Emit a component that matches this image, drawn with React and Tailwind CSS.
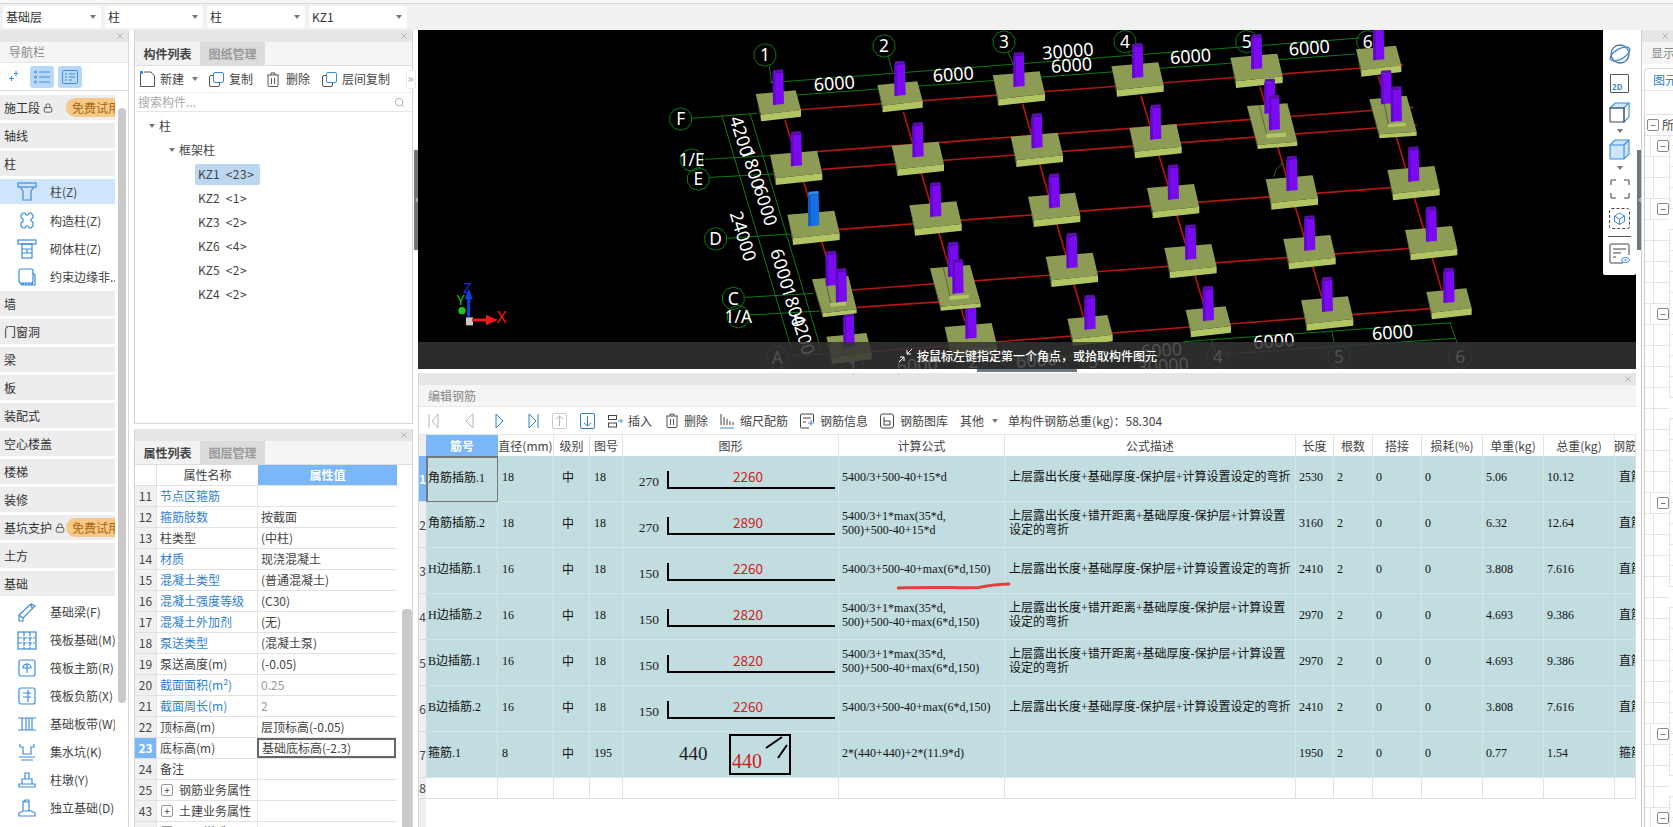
import React from 'react';
import { X, Search, Lock, ChevronsRight } from 'lucide-react';

const BLUE = '#3d8bdc';

// --- small drawings ---
const Ico = ({ w = 20, h = 20, children, color = BLUE, sw = 1.2 }) => (
  <svg width={w} height={h} viewBox={`0 0 ${w} ${h}`} fill="none" stroke={color} strokeWidth={sw} className="shrink-0">
    {children}
  </svg>
);

const navIcons = {
  col: <Ico><rect x="1" y="1" width="18" height="4" /><path d="M3 5l3 4v9h8V9l3-4" /></Ico>,
  gz: <Ico><path d="M6 2h2l1 2h2l1-2h2l2 2v3l-2 1v2l2 1v4l-2 2h-2l-1-2H9l-1 2H6l-2-2v-3l2-1v-3L4 7V4z" /></Ico>,
  qt: <Ico><rect x="1" y="1" width="18" height="4" /><rect x="5" y="5" width="10" height="14" /><path d="M5 10h10M5 14h10M10 10v4" /></Ico>,
  yb: <Ico><rect x="2" y="2" width="14" height="14" rx="2" /><path d="M16 6l2 2v10H5l-2-2M5 18l2-2M8 18l2-2M11 18l2-2M14 18l2-2" /></Ico>,
  jcl: <Ico><path d="M2 13L14 2l4 2L6 16v3H2zM2 13l4 3M14 2l1 4" /></Ico>,
  fb: <Ico><rect x="1" y="2" width="18" height="17" /><path d="M7 2v17M13 2v17M1 8h18M1 13h18" strokeDasharray="4 1" /></Ico>,
  zj: <Ico><rect x="2" y="2" width="16" height="16" rx="2" /><path d="M10 5v10M6 10a4 4 0 118 0H6z" /></Ico>,
  fj: <Ico><rect x="2" y="2" width="16" height="16" rx="2" /><path d="M6 7h8M6 11h8M11 4v12" /></Ico>,
  bd: <Ico><path d="M1 4h18M1 16h18M5 4v12M9 4v12M12 4v12M15 4v12" /></Ico>,
  jsk: <Ico><path d="M3 2v3h3v7h8V5h3V2M2 15h16M4 18h12" /></Ico>,
  zd: <Ico><path d="M8 3h4v6H8zM5 9h10v5H5zM2 14h16v3H2z" /></Ico>,
  dl: <Ico><path d="M6 4l2-2h4v11H6zM8 2v2h4M12 12l6 3v3H2v-3l4-2" /></Ico>,
};

const CloseBar = () => (
  <div className="h-[12px] bg-[#e6e6e6] flex items-center justify-end pr-[3px] shrink-0">
    <X size={10} color="#a9a9a9" />
  </div>
);

const Pill = () => (
  <div className="ml-auto h-[19px] w-[49px] bg-[#f6c988] rounded-l-full text-[12px] text-[#a8660f] pl-[6px] leading-[19px] overflow-hidden whitespace-nowrap">
    免费试用
  </div>
);

const Section = ({ label, lock, pill }) => (
  <div className="h-[25px] mb-[3px] bg-[#ededed] flex items-center pl-[4px] text-[12px] text-[#333]">
    {label}
    {lock && <Lock size={10} color="#444" className="ml-[3px]" />}
    {pill && <Pill />}
  </div>
);

const NavItem = ({ icon, label, active }) => (
  <div className={`flex items-center pl-[17px] text-[12px] text-[#444] whitespace-nowrap overflow-hidden ${active ? 'bg-[#cfe5fb] h-[25px] mb-[3px]' : 'h-[28px]'}`}>
    {navIcons[icon]}
    <span className="ml-[13px]">{label}</span>
  </div>
);

const LeftNav = () => (
  <div className="w-[129px] shrink-0 flex flex-col border-r border-[#d9d9d9]">
    <CloseBar />
    <div className="h-[21px] bg-[#f5f5f5] text-[12px] text-[#888] pl-[9px] flex items-center border-b border-[#e5e5e5]">导航栏</div>
    <div className="h-[28px] flex items-center border-b border-[#ddd] pl-[9px]">
      <svg width="11" height="11" viewBox="0 0 11 11" fill="none" stroke={BLUE}>
        <path d="M7 0v5M5 2.500h4M2.500 5v5M0 7.500h5" />
      </svg>
      <div className="ml-[10px] w-[24px] h-[22px] bg-[#b9d8f7] rounded-[3px] flex items-center justify-center">
        <Ico w={16} h={14} sw={1}><path d="M5 2h11M5 7h11M5 12h11" /><circle cx="1.500" cy="2" r="1" /><circle cx="1.500" cy="7" r="1" /><circle cx="1.500" cy="12" r="1" /></Ico>
      </div>
      <div className="ml-[4px] w-[24px] h-[22px] bg-[#b9d8f7] rounded-[3px] flex items-center justify-center">
        <Ico w={16} h={14} sw={1}><rect x="0.500" y="0.500" width="15" height="13" rx="1" /><path d="M3 4h2M7 4h6M3 7h2M7 7h6M3 10h2M7 10h3" /></Ico>
      </div>
    </div>
    <div className="flex flex-1 min-h-0 overflow-hidden">
      <div className="w-[115px] pt-[4px] shrink-0">
        <Section label="施工段" lock pill />
        <Section label="轴线" />
        <Section label="柱" />
        <NavItem icon="col" label="柱(Z)" active />
        <NavItem icon="gz" label="构造柱(Z)" />
        <NavItem icon="qt" label="砌体柱(Z)" />
        <NavItem icon="yb" label="约束边缘非.." />
        <Section label="墙" />
        <Section label="门窗洞" />
        <Section label="梁" />
        <Section label="板" />
        <Section label="装配式" />
        <Section label="空心楼盖" />
        <Section label="楼梯" />
        <Section label="装修" />
        <Section label="基坑支护" lock pill />
        <Section label="土方" />
        <Section label="基础" />
        <div className="-mt-[1px]" />
        <NavItem icon="jcl" label="基础梁(F)" />
        <NavItem icon="fb" label="筏板基础(M)" />
        <NavItem icon="zj" label="筏板主筋(R)" />
        <NavItem icon="fj" label="筏板负筋(X)" />
        <NavItem icon="bd" label="基础板带(W)" />
        <NavItem icon="jsk" label="集水坑(K)" />
        <NavItem icon="zd" label="柱墩(Y)" />
        <NavItem icon="dl" label="独立基础(D)" />
      </div>
      <div className="w-[8px] ml-[3px] mt-[17px] h-[595px] bg-[#c9c9c9] rounded-[4px]" />
    </div>
  </div>
);

const Tabs = ({ a, b }) => (
  <div className="h-[24px] bg-[#f5f5f5] flex border-b border-[#ddd] shrink-0">
    <div className="w-[65px] bg-[#f2f2f2] text-[12px] font-bold text-[#444] flex items-center justify-center">{a}</div>
    <div className="w-[65px] bg-[#dcdcdc] text-[12px] font-bold text-[#999] flex items-center justify-center">{b}</div>
  </div>
);

const ToolText = ({ children, className = '' }) => (
  <span className={`text-[12px] text-[#444] whitespace-nowrap ${className}`}>{children}</span>
);

const CopyIco = () => (
  <Ico w={15} h={15} color="#555" sw={1}>
    <rect x="0.500" y="3.500" width="10" height="11" rx="1.500" />
    <rect x="4.500" y="0.500" width="10" height="10" rx="1.500" fill="#fff" stroke={BLUE} />
  </Ico>
);

const TrashIco = ({ w = 14 }) => (
  <Ico w={w} h={15} color="#555" sw={1}>
    <path d="M1 3h12M5 3V1h4v2M2 3v10.500q0 1 1 1h8q1 0 1-1V3M5.500 6v6M8.500 6v6" />
  </Ico>
);

const tree = [
  ['KZ1', '<23>'], ['KZ2', '<1>'], ['KZ3', '<2>'], ['KZ6', '<4>'], ['KZ5', '<2>'], ['KZ4', '<2>'],
];

const Caret = ({ className = '' }) => (
  <span className={`w-0 h-0 border-l-[3px] border-r-[3px] border-t-[4px] border-l-transparent border-r-transparent border-t-[#777] ${className}`} />
);

const ListPanel = () => (
  <div className="h-[394px] flex flex-col border border-[#d5d5d5] border-t-0 shrink-0">
    <CloseBar />
    <Tabs a="构件列表" b="图纸管理" />
    <div className="h-[27px] flex items-center pl-[5px] border-b border-[#eee] shrink-0">
      <Ico w={15} h={16} color="#555" sw={1}><path d="M0.500 3v12.500h14V5L11 1H4" /><rect x="0" y="0" width="3" height="3" fill={BLUE} stroke="none" /></Ico>
      <ToolText className="ml-[5px]">新建</ToolText>
      <Caret className="ml-[8px]" />
      <span className="ml-[11px] flex"><CopyIco /></span>
      <ToolText className="ml-[5px]">复制</ToolText>
      <span className="ml-[13px] flex"><TrashIco /></span>
      <ToolText className="ml-[6px]">删除</ToolText>
      <span className="ml-[12px] flex"><CopyIco /></span>
      <ToolText className="ml-[5px]">层间复制</ToolText>
      <div className="ml-[16px] w-[10px] h-[19px] flex items-center justify-center bg-white border border-[#eee] rounded-[2px]">
        <ChevronsRight size={9} color="#555" />
      </div>
    </div>
    <div className="h-[19px] flex items-center justify-between pl-[3px] pr-[7px] border-b border-[#e5e5e5] text-[12px] text-[#aaa] shrink-0">
      搜索构件...
      <Search size={11} color="#aaa" />
    </div>
    <div className="pt-[2px] text-[12px] text-[#444]">
      <div className="h-[24px] flex items-center pl-[14px]"><Caret /><span className="ml-[4px]">柱</span></div>
      <div className="h-[24px] flex items-center pl-[34px]"><Caret /><span className="ml-[4px]">框架柱</span></div>
      {tree.map(([a, b], i) => (
        <div key={a} className="h-[24px] flex items-center pl-[60px]">
          <div className={`h-[21px] w-[65px] flex items-center pl-[3px] rounded-[2px] ${i === 0 ? 'bg-[#bcd7f2]' : ''}`}>
            {a}<span className="ml-[6px] tracking-[0.5px]">{b}</span>
          </div>
        </div>
      ))}
    </div>
  </div>
);

const props = [
  [11, '节点区箍筋', '', 1],
  [12, '箍筋肢数', '按截面', 1],
  [13, '柱类型', '(中柱)', 0],
  [14, '材质', '现浇混凝土', 1],
  [15, '混凝土类型', '(普通混凝土)', 1],
  [16, '混凝土强度等级', '(C30)', 1],
  [17, '混凝土外加剂', '(无)', 1],
  [18, '泵送类型', '(混凝土泵)', 1],
  [19, '泵送高度(m)', '(-0.05)', 0],
  [20, '截面面积(m²)', '0.25', 1, 1],
  [21, '截面周长(m)', '2', 1, 1],
  [22, '顶标高(m)', '层顶标高(-0.05)', 0],
  [23, '底标高(m)', '基础底标高(-2.3)', 0],
  [24, '备注', '', 0],
];

const PropRow = ({ no, name, value, link, dim, expand, sel }) => (
  <div className="flex h-[21px] border-b border-[#e2e2e2] text-[12px] shrink-0">
    <div className={`w-[22px] shrink-0 flex items-center justify-center border-r border-[#e2e2e2] ${sel ? 'bg-[#79b7f9] text-white font-bold' : 'bg-[#f0f0f0] text-[#444]'}`}>{no}</div>
    <div className={`w-[101px] shrink-0 flex items-center pl-[3px] border-r border-[#e2e2e2] ${link ? 'text-[#2f7fd6]' : 'text-[#444]'}`}>
      {expand && (
        <span className="w-[12px] h-[12px] mr-[6px] ml-[1px] border border-[#999] rounded-[2px] flex items-center justify-center text-[10px] leading-none">+</span>
      )}
      {name}
    </div>
    <div className={`w-[139px] flex items-center pl-[3px] ${dim ? 'text-[#999]' : 'text-[#444]'} ${sel ? 'border-2 border-[#666] -ml-px' : ''}`}>{value}</div>
  </div>
);

const PropPanel = () => (
  <div className="flex-1 min-h-0 mt-[5px] flex flex-col border-l border-[#d5d5d5] border-r overflow-hidden">
    <CloseBar />
    <Tabs a="属性列表" b="图层管理" />
    <div className="flex flex-1 min-h-0">
      <div className="w-[262px] flex flex-col shrink-0">
        <div className="flex h-[21px] border-b border-[#e2e2e2] text-[12px] shrink-0">
          <div className="w-[22px] border-r border-[#e2e2e2]" />
          <div className="w-[101px] flex items-center justify-center text-[#444]">属性名称</div>
          <div className="w-[139px] flex items-center justify-center bg-[#79b7f9] text-white font-bold">属性值</div>
        </div>
        {props.map(([no, name, value, link, dim]) => (
          <PropRow key={no} no={no} name={name} value={value} link={!!link} dim={!!dim} sel={no === 23} />
        ))}
        <PropRow no={25} name="钢筋业务属性" expand />
        <PropRow no={43} name="土建业务属性" expand />
        <PropRow no={50} name="显示样式" expand />
      </div>
      <div className="w-[7px] ml-[5px] mt-[144px] flex-1 bg-[#c9c9c9] rounded-t-[4px]" />
    </div>
  </div>
);

// --- 3D view. The viewBox is in units of a third of a pixel ---
const SMALL = [[-68, -32], [52, -43], [68, 16], [-52, 30]];
const LARGE = [[-79, -34], [62, -46], [78, 22], [-62, 37]];

const pts = (list) => list.map((p) => p.join(',')).join(' ');

const Footing = ({ top, h = 20 }) => (
  <g>
    <polygon points={pts([top[0], top[3], [top[3][0], top[3][1] + h], [top[0][0] + 3, top[0][1] + 14]])} fill="#5c6635" />
    <polygon points={pts(top)} fill="#8d9c55" />
    <polygon points={pts([top[3], top[2], [top[2][0], top[2][1] + h], [top[3][0], top[3][1] + h]])} fill="#b1c662" />
  </g>
);

const Column = ({ x, y0, y1, blue }) => (
  <g>
    <polygon points={pts([[x - 17, y0 + 12], [x + 15, y0 + 9], [x + 17, y1 - 2], [x - 16, y1 + 1]])} fill={blue ? '#1670e8' : '#7a0af0'} />
    <polygon points={pts([[x - 17, y0 + 12], [x - 9, y0 + 12], [x - 8, y1], [x - 16, y1 + 1]])} fill={blue ? '#1259c4' : '#6208c8'} />
    <polygon points={pts([[x - 15, y0 + 2], [x + 14, y0], [x + 15, y0 + 9], [x - 17, y0 + 12]])} fill={blue ? '#2a8cf0' : '#5a0fb0'} />
  </g>
);

const footings = [
  [325, 224, 118, SMALL], [690, 197, 92, SMALL], [1047, 170, 66, LARGE], [1403, 143, 39, LARGE], [1760, 117, 12, LARGE], [2126, 90, -14, SMALL],
  [379, 408, 303, LARGE], [744, 381, 276, LARGE], [1101, 354, 249, LARGE], [1457, 328, 223, LARGE],
  [431, 588, 483, LARGE, true], [797, 560, 456, LARGE], [1153, 534, 430, LARGE], [1510, 508, 403, LARGE], [1866, 482, 377, LARGE], [2231, 454, 349, LARGE],
  [1206, 714, 608, LARGE], [1562, 688, 583, LARGE], [1919, 661, 556, LARGE], [2284, 634, 529, LARGE],
  [537, 952, 848, SMALL], [903, 925, 820, LARGE], [1260, 898, 794, SMALL], [1615, 872, 767, SMALL], [1972, 845, 740, LARGE], [2337, 818, 713, SMALL],
];

const talls = [
  { top: [[426, 748], [535, 738], [560, 838], [458, 850]], strip: [[480, 820], [528, 816], [528, 826], [482, 830]], line: [465, 745, 482, 820], a: [484, 767, 662], b: [514, 816, 714] },
  { top: [[780, 715], [900, 705], [932, 820], [812, 830]], strip: [[838, 798], [897, 794], [897, 805], [840, 810]], line: [820, 712, 840, 798], a: [850, 740, 635], b: [864, 790, 687] },
  { top: [[1731, 228], [1852, 220], [1882, 335], [1763, 345]], strip: [[1788, 312], [1848, 308], [1848, 320], [1790, 324]], line: [1768, 226, 1790, 312], a: [1800, 250, 146], b: [1813, 300, 195] },
  { top: [[2098, 208], [2210, 197], [2240, 305], [2128, 313]], strip: [[2153, 282], [2207, 278], [2207, 288], [2155, 292]], line: [2140, 205, 2155, 282], a: [2149, 222, 120], b: [2179, 274, 168] },
];

const redLines = [
  [340, 243, 2200, 105], [440, 365, 2230, 232], [457, 418, 2240, 285],
  [500, 599, 2240, 467], [545, 780, 2290, 650], [560, 832, 830, 814], [600, 965, 2290, 835],
  [345, 270, 520, 850], [700, 245, 885, 875], [1058, 222, 1240, 860], [1413, 197, 1600, 820], [1770, 170, 1955, 800], [2125, 138, 2315, 780],
];

const greenLines = [
  [300, 158, 2070, 24], [380, 195, 2057, 72],
  [298, 108, 305, 160], [655, 80, 668, 128], [1015, 68, 1030, 103], [1375, 68, 1385, 80],
  [65, 265, 262, 250], [105, 388, 302, 377], [120, 442, 312, 432], [170, 625, 360, 612], [225, 802, 430, 790], [240, 855, 450, 843], [355, 978, 480, 970],
  [155, 255, 365, 960], [240, 250, 455, 965],
  [1540, 935, 2345, 878], [1625, 975, 2355, 925],
  [1625, 928, 1640, 980], [1985, 903, 1995, 950], [2340, 878, 2365, 950],
  [820, 1000, 1500, 960],
];

const bubbles = [
  [285, 75, '1'], [642, 48, '2'], [1002, 36, '3'], [1365, 35, '4'], [1730, 35, '5'], [2093, 35, '6'],
  [32, 267, 'F'], [65, 390, '1/E', 52], [85, 447, 'E'], [137, 627, 'D'], [190, 805, 'C'], [205, 860, '1/A', 52], [322, 982, 'A'],
  [1643, 980, '4'], [2007, 980, '5'], [2371, 980, '6'], [910, 995, '2'], [1270, 995, '3'], [548, 1010, '1'],
];

const labels = [
  [493, 165, '6000', -4.300], [850, 138, '6000', -4.300], [1194, 68, '30000', -4.300], [1205, 110, '6000', -4.300],
  [1562, 84, '6000', -4.300], [1918, 58, '6000', -4.300], [2168, 912, '6000', -4.300], [1812, 938, '6000', -4.300],
  [742, 1010, '6000', -4.300], [1100, 995, '6000', -4.300], [1475, 965, '6000', -4.300], [1480, 1012, '30000', -4.300],
  [210, 320, '4200', 73], [245, 418, '1800', 73], [282, 528, '6000', 73], [215, 620, '24000', 73],
  [332, 718, '6000', 73], [366, 832, '1800', 73], [395, 915, '4200', 73],
];

const decagon = (cx, cy, r = 34) =>
  Array.from({ length: 10 }, (_, i) => {
    const a = (i / 10) * Math.PI * 2 + 0.3;
    return `${(cx + r * Math.cos(a)).toFixed(1)},${(cy + r * Math.sin(a)).toFixed(1)}`;
  }).join(' ');

const Scene = () => (
  <svg viewBox="-756 0 3654 1017" className="block w-full h-full" fontFamily="'Noto Sans', sans-serif">
    {greenLines.map((l, i) => (
      <line key={i} x1={l[0]} y1={l[1]} x2={l[2]} y2={l[3]} stroke="#0f7a1a" strokeWidth="3" />
    ))}
    {redLines.map((l, i) => (
      <line key={i} x1={l[0]} y1={l[1]} x2={l[2]} y2={l[3]} stroke="#b01616" strokeWidth="5" />
    ))}
    {bubbles.map(([x, y, t, size]) => (
      <g key={`${x}-${t}`}>
        <polygon points={decagon(x, y)} fill="none" stroke="#0f7a1a" strokeWidth="3" />
        <text x={x} y={y + 19} textAnchor="middle" fontSize={size || 52} fill="#fff">{t}</text>
      </g>
    ))}
    <path d="M1812 440q4-30 30-40" fill="none" stroke="#0f7a1a" strokeWidth="3" />
    {labels.map(([x, y, t, r]) => (
      <text key={`${x}-${y}`} x={x} y={y} textAnchor="middle" dominantBaseline="middle" fontSize="54" fill="#fff" transform={`rotate(${r} ${x} ${y})`}>{t}</text>
    ))}
    {footings.map(([x, y1, y0, shape, blue]) => (
      <g key={`${x}-${y1}`}>
        <Footing top={shape.map(([dx, dy]) => [x + dx, y1 + dy])} />
        <Column x={x} y0={y0} y1={y1} blue={blue} />
      </g>
    ))}
    {talls.map((t) => (
      <g key={t.a[0]}>
        <Footing top={t.top} h={12} />
        <line x1={t.line[0]} y1={t.line[1]} x2={t.line[2]} y2={t.line[3]} stroke="#5c6635" strokeWidth="3" />
        <polygon points={pts(t.strip)} fill="#b1c662" />
        <Column x={t.a[0]} y0={t.a[2]} y1={t.a[1]} />
        <Column x={t.b[0]} y0={t.b[2]} y1={t.b[1]} />
      </g>
    ))}
    {/* axis gizmo */}
    <g>
      <rect x="-612" y="862" width="21" height="24" fill="#c8c8c8" />
      <circle cx="-624" cy="842" r="11" fill="#19c719" />
      <path d="M-604 860V800" stroke="#1040e0" strokeWidth="9" />
      <path d="M-616 808l12-32 12 32z" fill="#1040e0" />
      <path d="M-594 870h50" stroke="#f01818" strokeWidth="9" />
      <path d="M-552 854l36 16-36 16z" fill="#f01818" />
      <text x="-620" y="790" fontSize="42" fill="#1433e6">Z</text>
      <text x="-640" y="825" fontSize="42" fill="#19c719">Y</text>
      <text x="-520" y="880" fontSize="50" fill="#f01818">X</text>
    </g>
  </svg>
);

const SideTool = ({ children, className = '' }) => (
  <div className={`flex justify-center ${className}`}>{children}</div>
);

const ViewTools = () => (
  <div className="absolute top-0 right-0 w-[33px] h-[245px] bg-white rounded-b-[2px] flex flex-col items-center pt-[14px]">
    <SideTool>
      <Ico w={22} h={20} sw={1.3}>
        <ellipse cx="11" cy="10" rx="9" ry="9" stroke="#4a6f9c" />
        <ellipse cx="11" cy="10" rx="11" ry="5" transform="rotate(-30 11 10)" />
      </Ico>
    </SideTool>
    <SideTool className="mt-[10px]">
      <div className="w-[19px] h-[19px] border border-[#555] rounded-[1px] flex items-end pl-[1px] text-[8px] font-bold leading-[10px] text-[#3d7fcc]">2D</div>
    </SideTool>
    <SideTool className="mt-[9px]">
      <Ico w={21} h={21} color="#444" sw={1.1}>
        <path d="M1 6L6 1h14l-5 5z" fill="#cfe5fb" stroke={BLUE} />
        <path d="M15 6v14l5-5V1" stroke={BLUE} />
        <path d="M1 6h14v14H2q-1 0-1-1z" />
      </Ico>
    </SideTool>
    <Caret className="mt-[6px] border-t-[#555]" />
    <SideTool className="mt-[6px]">
      <Ico w={21} h={21} sw={1.1}>
        <path d="M1 6L6 1h14v14l-5 5H2q-1 0-1-1z" fill="#cfe5fb" />
        <path d="M1 6h14v14M15 6l5-5" />
      </Ico>
    </SideTool>
    <Caret className="mt-[6px] border-t-[#555]" />
    <SideTool className="mt-[9px]">
      <Ico w={20} h={20} color="#444" sw={1.1}>
        <path d="M1 6V2q0-1 1-1h4M14 1h4q1 0 1 1v4M19 14v4q0 1-1 1h-4M6 19H2q-1 0-1-1v-4" />
      </Ico>
    </SideTool>
    <SideTool className="mt-[9px]">
      <Ico w={21} h={21} color="#444" sw={1}>
        <rect x="0.500" y="0.500" width="20" height="20" rx="2" strokeDasharray="3 2" />
        <path d="M10.500 5l5 3v5.500l-5 3-5-3V8zM5.500 8l5 3 5-3M10.500 11v5.500" stroke={BLUE} />
      </Ico>
    </SideTool>
    <div className="w-[23px] h-px bg-[#555] mt-[7px]" />
    <SideTool className="mt-[6px]">
      <Ico w={21} h={21} color="#444" sw={1}>
        <path d="M14 20H2q-1 0-1-1V2q0-1 1-1h17q1 0 1 1v10" />
        <path d="M4 6h13M4 10h8M4 14h3" />
        <ellipse cx="16.500" cy="17" rx="4" ry="2.500" stroke={BLUE} />
        <circle cx="16.500" cy="17" r="1" fill={BLUE} stroke="none" />
      </Ico>
    </SideTool>
  </div>
);

const StatusBar = () => (
  <div className="absolute left-0 right-0 bottom-0 h-[27px] bg-[#333333]/[.86] flex items-center pl-[480px] text-[12px] font-medium text-white">
    <svg width="15" height="15" viewBox="0 0 15 15" fill="none" stroke="#fff" strokeWidth="1" className="mr-[4px]">
      <path d="M14 1L9 6M9 2v4h4M1 14l5-5M6 13V9H2" />
    </svg>
    按鼠标左键指定第一个角点，或拾取构件图元
  </div>
);

const Viewport = () => (
  <div className="h-[339px] bg-black relative overflow-hidden shrink-0">
    <Scene />
    <StatusBar />
    <ViewTools />
  </div>
);

// --- rebar table ---
const COLS = 'grid grid-cols-[7px_72px_56px_36px_33px_216px_166px_291px_38px_39px_49px_61px_61px_71px_21px]';
const SERIF = "font-['Liberation_Serif','Noto_Sans_CJK_SC',serif]";

const DESC_A = '上层露出长度+基础厚度-保护层+计算设置设定的弯折';
const DESC_B = '上层露出长度+错开距离+基础厚度-保护层+计算设置设定的弯折';

const rebars = [
  { name: '角筋插筋.1', d: 18, fig: 18, h: 270, len: 2260, f: ['5400/3+500-40+15*d'], desc: DESC_A, l: 2530, u: '5.06', t: '10.12', k: '直筋' },
  { name: '角筋插筋.2', d: 18, fig: 18, h: 270, len: 2890, f: ['5400/3+1*max(35*d,', '500)+500-40+15*d'], desc: DESC_B, l: 3160, u: '6.32', t: '12.64', k: '直筋' },
  { name: 'H边插筋.1', d: 16, fig: 18, h: 150, len: 2260, f: ['5400/3+500-40+max(6*d,150)'], desc: DESC_A, l: 2410, u: '3.808', t: '7.616', k: '直筋' },
  { name: 'H边插筋.2', d: 16, fig: 18, h: 150, len: 2820, f: ['5400/3+1*max(35*d,', '500)+500-40+max(6*d,150)'], desc: DESC_B, l: 2970, u: '4.693', t: '9.386', k: '直筋' },
  { name: 'B边插筋.1', d: 16, fig: 18, h: 150, len: 2820, f: ['5400/3+1*max(35*d,', '500)+500-40+max(6*d,150)'], desc: DESC_B, l: 2970, u: '4.693', t: '9.386', k: '直筋' },
  { name: 'B边插筋.2', d: 16, fig: 18, h: 150, len: 2260, f: ['5400/3+500-40+max(6*d,150)'], desc: DESC_A, l: 2410, u: '3.808', t: '7.616', k: '直筋' },
  { name: '箍筋.1', d: 8, fig: 195, stirrup: true, f: ['2*(440+440)+2*(11.9*d)'], desc: '', l: 1950, u: '0.77', t: '1.54', k: '箍筋' },
];

const Cell = ({ children, className = '' }) => (
  <div className={`flex items-center pl-[4px] pb-[4px] border-r border-b border-[#d4e6e8] overflow-hidden text-[12px] leading-[14px] text-[#111] ${className}`}>
    {children}
  </div>
);

const Hook = ({ h, len }) => (
  <div className="flex items-start">
    <div className={`w-[36px] text-right mt-[18px] text-[13.500px] leading-[16px] text-[#222] ${SERIF}`}>{h}</div>
    <div className="ml-[8px] mt-[15px] w-[168px] h-[18px] border-l-2 border-b-2 border-black text-center text-[13.500px] leading-[10px] text-[#d02020] pr-[8px]">{len}</div>
  </div>
);

const Stirrup = () => (
  <div className="flex items-center h-full">
    <div className={`ml-[56px] w-[50px] text-[19px] text-[#222] ${SERIF}`}>440</div>
    <div className="w-[62px] h-[41px] border-2 border-black relative flex items-end pl-[1px] mt-[-1px]">
      <span className={`text-[20px] leading-[24px] text-[#d02020] ${SERIF}`}>440</span>
      <svg width="58" height="37" className="absolute left-0 top-0" stroke="#000" strokeWidth="2">
        <path d="M35 12L51 1M47 22L56 9" />
      </svg>
    </div>
  </div>
);

const TableRow = ({ r, i }) => (
  <div className={`${COLS} h-[46px] bg-[#c1dde0]`}>
    <div className={`flex items-center justify-center text-[12px] border-b border-[#ddd] ${i === 0 ? 'bg-[#79b7f9] text-white font-bold' : 'bg-[#efefef] text-[#444]'}`}>{i + 1}</div>
    <Cell className={`${SERIF} ${i === 0 ? 'border-2 !border-[#777] !pl-[0px]' : '!pl-[2px]'}`}>{r.name}</Cell>
    <Cell className={SERIF}>{r.d}</Cell>
    <Cell className="!pl-[8px]">中</Cell>
    <Cell className={SERIF}>{r.fig}</Cell>
    <div className="border-r border-b border-[#d4e6e8] overflow-hidden">
      {r.stirrup ? <Stirrup /> : <Hook h={r.h} len={r.len} />}
    </div>
    <Cell className={`!pl-[3px] ${SERIF}`}>
      <div>{r.f.map((line) => <div key={line}>{line}</div>)}</div>
    </Cell>
    <Cell className={SERIF}>{r.desc}</Cell>
    <Cell className={`!pl-[3px] ${SERIF}`}>{r.l}</Cell>
    <Cell className={`!pl-[3px] ${SERIF}`}>2</Cell>
    <Cell className={`!pl-[3px] ${SERIF}`}>0</Cell>
    <Cell className={`!pl-[3px] ${SERIF}`}>0</Cell>
    <Cell className={`!pl-[3px] ${SERIF}`}>{r.u}</Cell>
    <Cell className={`!pl-[3px] ${SERIF}`}>{r.t}</Cell>
    <Cell className={`whitespace-nowrap ${SERIF}`}>{r.k}</Cell>
  </div>
);

const heads = ['直径(mm)', '级别', '图号', '图形', '计算公式', '公式描述', '长度', '根数', '搭接', '损耗(%)', '单重(kg)', '总重(kg)', '钢筋'];

const RebarTable = () => (
  <div className="flex-1 min-h-0 overflow-hidden bg-white">
    <div className={`${COLS} h-[21px] text-[12px] text-[#444]`}>
      <div className="bg-[#efefef]" />
      <div className="bg-[#79b7f9] text-white font-bold flex items-center justify-center">筋号</div>
      {heads.map((h) => (
        <div key={h} className="flex items-center justify-center border-r border-[#e2e2e2] overflow-hidden whitespace-nowrap">{h}</div>
      ))}
    </div>
    {rebars.map((r, i) => <TableRow key={r.name} r={r} i={i} />)}
    <div className={`${COLS} h-[21px] text-[12px]`}>
      <div className="bg-[#efefef] flex items-center justify-center text-[#444] border-b border-[#ddd]">8</div>
      {Array.from({ length: 14 }, (_, k) => (
        <div key={k} className="border-r border-b border-[#e2e2e2]" />
      ))}
    </div>
    <div className="w-[7px] h-[40px] bg-[#efefef]" />
  </div>
);

const Arrow = ({ d, color = '#b5b5b5', w = 12 }) => (
  <svg width={w} height="16" viewBox={`0 0 ${w} 16`} fill="none" stroke={color} strokeWidth="1" className="shrink-0">
    <path d={d} />
  </svg>
);

const RebarToolbar = () => (
  <div className="h-[28px] flex items-center pl-[9px] border-b border-[#e5e5e5] text-[12px] text-[#444] whitespace-nowrap shrink-0">
    <Arrow d="M1 1v14M10 1L4 8l6 7z" />
    <span className="ml-[24px] flex"><Arrow d="M9 1L2 8l7 7z" /></span>
    <span className="ml-[18px] flex"><Arrow d="M2 1l7 7-7 7z" color="#2f7fd6" /></span>
    <span className="ml-[21px] flex"><Arrow d="M2 1l7 7-7 7zM11 1v14" color="#2f7fd6" /></span>
    <div className="ml-[13px] w-[15px] h-[16px] border border-[#ccc] rounded-[2px] flex items-center justify-center">
      <Arrow w={9} d="M4.500 13V3M1 6l3.500-3L8 6" />
    </div>
    <div className="ml-[13px] w-[15px] h-[16px] border border-[#2f7fd6] rounded-[2px] flex items-center justify-center">
      <Arrow w={9} d="M4.500 3v10M1 10l3.500 3L8 10" color="#2f7fd6" />
    </div>
    <span className="ml-[13px] flex"><Ico w={15} h={14} color="#444" sw={1}><rect x="0.500" y="1.500" width="8" height="4" /><rect x="0.500" y="9" width="8" height="4" /><path d="M10 7h4M12.500 5l2 2-2 2" stroke={BLUE} /></Ico></span>
    <span className="ml-[5px]">插入</span>
    <span className="ml-[13px] flex"><TrashIco w={13} /></span>
    <span className="ml-[6px]">删除</span>
    <span className="ml-[12px] flex"><Ico w={14} h={16} color="#444" sw={1}><path d="M1 1v11M4 4v8M7 6v6M10 8v4M13 9v3" /><path d="M0 15h14" stroke={BLUE} /></Ico></span>
    <span className="ml-[6px]">缩尺配筋</span>
    <span className="ml-[12px] flex"><Ico w={15} h={16} color="#444" sw={1}><path d="M9 15H1.500q-1 0-1-1V2q0-1 1-1h11q1 0 1 1v7" /><path d="M3 5h8M3 9h3" /><path d="M8 10l6 0M11 7v6" stroke={BLUE} /></Ico></span>
    <span className="ml-[5px]">钢筋信息</span>
    <span className="ml-[12px] flex"><Ico w={14} h={16} color="#444" sw={1}><rect x="0.500" y="1" width="13" height="14" rx="2" /><path d="M4 4v8h6V8H4" /></Ico></span>
    <span className="ml-[6px]">钢筋图库</span>
    <span className="ml-[12px]">其他</span>
    <Caret className="ml-[8px]" />
    <span className="ml-[10px]">单构件钢筋总重(kg)：58.304</span>
  </div>
);

const RebarPanel = () => (
  <div className="flex-1 min-h-0 flex flex-col border-l border-[#d5d5d5] relative">
    <CloseBar />
    <div className="h-[22px] bg-[#f5f5f5] flex items-center pl-[9px] text-[12px] text-[#888] border-b border-[#e8e8e8] shrink-0">编辑钢筋</div>
    <RebarToolbar />
    <RebarTable />
    {/* hand-drawn marker over the third row */}
    <svg width="115" height="10" className="absolute left-[478px] top-[209px]" fill="none" stroke="#e2403f" strokeWidth="3" strokeLinecap="round">
      <path d="M1 6C30 5 60 6 82 5.500C88 4 94 2.500 112 2" />
    </svg>
  </div>
);

const Splitter = () => (
  <div className="shrink-0 flex justify-end w-[5px]">
    <div className="w-[4px] h-[100px] mt-[120px] bg-[#6f777e] flex items-center justify-center">
      <span className="w-0 h-0 border-y-[3px] border-r-[3px] border-y-transparent border-r-[#aab0b5]" />
    </div>
  </div>
);

const GRID_LINE = 'border-[#e4e4e4]';
const MINUS_ROWS = [0, 3, 8, 17, 28, 32];

const MinusBox = ({ className = '' }) => (
  <span className={`w-[12px] h-[12px] border border-[#888] rounded-[2px] bg-white flex items-center justify-center text-[10px] leading-none text-[#555] shrink-0 ${className}`}>−</span>
);

const RightPanel = () => {
  const rows = Array.from({ length: 34 }, (_, i) => i);
  return (
    <div className="w-[32px] flex flex-col overflow-hidden border-l border-[#ccc] shrink-0">
      <CloseBar />
      <div className="h-[22px] bg-[#f5f5f5] text-[12px] text-[#888] pl-[9px] flex items-center whitespace-nowrap shrink-0">显示设置</div>
      <div className="h-[27px] pt-[4px] pl-[2px] bg-white shrink-0 border-b border-[#e5e5e5]">
        <div className="h-[23px] w-[40px] border border-[#ddd] border-b-0 rounded-t-[4px] pl-[8px] text-[12px] leading-[22px] text-[#2f7fd6] whitespace-nowrap">图元显示</div>
      </div>
      <div className="h-[24px] ml-[2px] border-l border-b border-[#ddd] shrink-0" />
      <div className="flex-1 min-h-0 ml-[2px] border-l border-[#ccc] overflow-hidden flex flex-col">
        <div className={`h-[21px] flex items-center pl-[2px] border-b ${GRID_LINE} text-[12px] text-[#444] whitespace-nowrap overflow-hidden shrink-0`}>
          <MinusBox className="mr-[3px]" />
          所有构件
        </div>
        <div className="flex min-h-0">
          <div className="w-[24px] shrink-0">
            {rows.map((i) => (
              <div key={i} className={`h-[21px] border-b ${GRID_LINE} flex items-center`}>
                <span className={`h-full w-[9px] border-r ${GRID_LINE}`} />
                {MINUS_ROWS.includes(i) ? <MinusBox className="ml-[6px]" /> : null}
              </div>
            ))}
          </div>
          <div className="flex-1 -mt-[11px]">
            {rows.map((i) => (
              <div key={i} className={`h-[21px] border-b ${GRID_LINE} ${i % 9 === 4 ? '' : 'border-l'}`} />
            ))}
          </div>
        </div>
      </div>
    </div>
  );
};

export default function App() {
  return (
    <div className="w-[1673px] h-[827px] overflow-hidden bg-white flex flex-col font-['Noto_Sans_CJK_SC','Noto_Sans',sans-serif]">
      <div className="h-[3px] bg-[#f7f7f7] shrink-0" />
      <div className="h-[27px] shrink-0 bg-[#f1f1f1] border-t border-[#d8d8d8] flex items-start gap-[4px] pl-[3px] pt-[2px]">
        {['基础层', '柱', '柱', 'KZ1'].map((t, i) => (
          <div key={i} className="w-[98px] h-[22px] bg-white rounded-[3px] flex items-center justify-between pl-[3px] pr-[5px] text-[12px] text-[#333]">
            {t}
            <Caret className="border-t-[#555]" />
          </div>
        ))}
      </div>
      <div className="flex flex-1 min-h-0">
        <LeftNav />
        <div className="w-[5px] shrink-0" />
        <div className="w-[279px] shrink-0 flex flex-col">
          <ListPanel />
          <PropPanel />
        </div>
        <Splitter />
        <div className="w-[1218px] shrink-0 flex flex-col">
          <Viewport />
          <div className="h-[4px] shrink-0 flex justify-center">
            <div className="w-[100px] h-[3px] bg-[#6f777e]" />
          </div>
          <RebarPanel />
        </div>
        <Splitter />
        <RightPanel />
      </div>
    </div>
  );
}
